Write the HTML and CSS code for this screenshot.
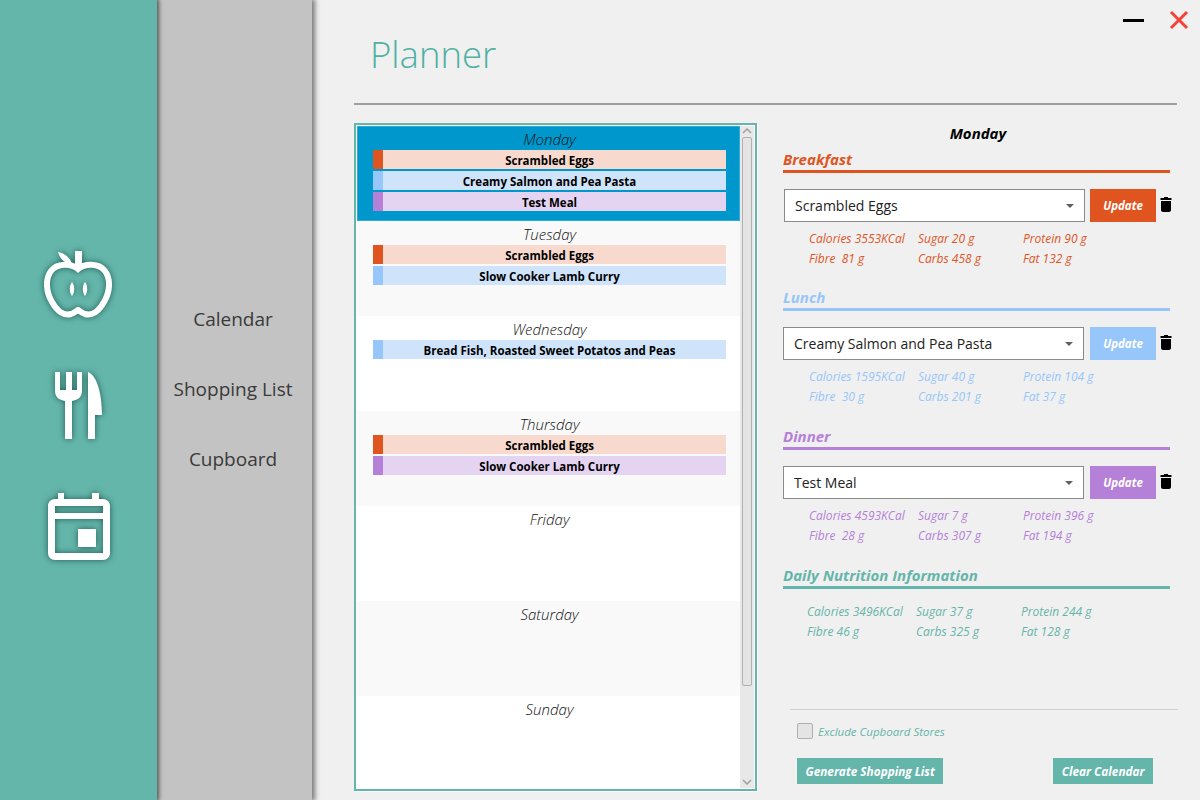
FILE: index.html
```html
<!DOCTYPE html>
<html lang="en">
<head>
    <meta charset="UTF-8">
    <title>Planner</title>
    <link rel="stylesheet" href="styles.css">
</head>
<body>
    <div class="app">
        <div class="iconBar">
            <svg class="icon" width="70" height="70" viewBox="0 0 70 70">
                <path d="M34 19C27 13 13 13 7 21C1 29 2 42 8 52C13 61 20 66 27 64C30 63 32 61 34 60C36 61 38 63 41 64C48 66 55 61 60 52C66 42 67 29 61 21C55 13 41 13 34 19Z" fill="none" stroke="#fff" stroke-width="6"/>
                <path d="M31 1H38V17L34 21L31 18Z" fill="#fff"/>
                <path d="M14 2C20 3 26 7 28 14C22 14 16 10 14 2Z" fill="#fff"/>
                <path d="M28 32C31 36 31 42 28 46C25 42 25 36 28 32ZM41 32C44 36 44 42 41 46C38 42 38 36 41 32Z" fill="#fff"/>
            </svg>
            <svg class="icon" width="50" height="70" viewBox="0 0 50 70">
                <path d="M1 1H6V19H12V1H18V19H23V1H28V20C28 26 24 29 18 30V68H11V30C5 29 1 26 1 20Z" fill="#fff"/>
                <path d="M34 1C42 4 48 20 48 44H41V68H34Z" fill="#fff"/>
            </svg>
            <svg class="icon" width="64" height="70" viewBox="0 0 64 70">
                <path d="M11 1H17V7H45V1H52V7H56C60 7 63 10 63 14V61C63 65 60 68 56 68H8C4 68 1 65 1 61V14C1 10 4 7 8 7H11ZM8 14V21H56V14ZM8 27V61H56V27ZM31 37H49V55H31Z" fill="#fff" fill-rule="evenodd"/>
            </svg>
        </div>

        <div class="navBar">
            <a class="navLink">Calendar</a>
            <a class="navLink">Shopping List</a>
            <a class="navLink">Cupboard</a>
        </div>

        <div class="main">
            <div class="windowBtns">
                <span class="minBtn"></span>
                <svg width="20" height="20" viewBox="0 0 20 20"><path d="M2 2L18 18M18 2L2 18" stroke="#f44336" stroke-width="3"/></svg>
            </div>

            <div class="header"><h1>Planner</h1></div>

            <div class="content">
                <div class="weekBox">
                    <div class="weekList">
                        <div class="day selected">
                            <div class="dayName">Monday</div>
                            <div class="meal breakfast"><span class="swatch"></span><span class="mealName">Scrambled Eggs</span></div>
                            <div class="meal lunch"><span class="swatch"></span><span class="mealName">Creamy Salmon and Pea Pasta</span></div>
                            <div class="meal dinner"><span class="swatch"></span><span class="mealName">Test Meal</span></div>
                        </div>
                        <div class="day odd">
                            <div class="dayName">Tuesday</div>
                            <div class="meal breakfast"><span class="swatch"></span><span class="mealName">Scrambled Eggs</span></div>
                            <div class="meal lunch"><span class="swatch"></span><span class="mealName">Slow Cooker Lamb Curry</span></div>
                        </div>
                        <div class="day">
                            <div class="dayName">Wednesday</div>
                            <div class="meal lunch"><span class="swatch"></span><span class="mealName">Bread Fish, Roasted Sweet Potatos and Peas</span></div>
                        </div>
                        <div class="day odd">
                            <div class="dayName">Thursday</div>
                            <div class="meal breakfast"><span class="swatch"></span><span class="mealName">Scrambled Eggs</span></div>
                            <div class="meal dinner"><span class="swatch"></span><span class="mealName">Slow Cooker Lamb Curry</span></div>
                        </div>
                        <div class="day"><div class="dayName">Friday</div></div>
                        <div class="day odd"><div class="dayName">Saturday</div></div>
                        <div class="day"><div class="dayName">Sunday</div></div>
                    </div>
                    <div class="scrollBar">
                        <svg class="scrollUp" width="14" height="11" viewBox="0 0 14 11"><path d="M3 7L7 3L11 7" fill="none" stroke="#a0a0a0" stroke-width="1.5"/></svg>
                        <div class="scrollThumb"></div>
                        <svg class="scrollDown" width="14" height="12" viewBox="0 0 14 12"><path d="M3 4L7 8L11 4" fill="none" stroke="#a0a0a0" stroke-width="1.5"/></svg>
                    </div>
                </div>

                <div class="details">
                    <div class="detailsDay">Monday</div>

                    <div class="section breakfastText">
                        <div class="sectionTitle">Breakfast</div>
                        <div class="mealRow first">
                            <div class="selectWrap"><select><option>Scrambled Eggs</option></select></div>
                            <button class="updateBtn">Update</button>
                            <svg class="trash" width="12" height="15" viewBox="0 0 12 15"><path d="M4 0H8V1H11.500V3H.5V1H4ZM1 4H11V13C11 14 10 15 9 15H3C2 15 1 14 1 13Z" fill="#000"/></svg>
                        </div>
                        <div class="stats">
                            <span>Calories 3553KCal</span><span>Sugar 20 g</span><span>Protein 90 g</span>
                            <span>Fibre &nbsp;81 g</span><span>Carbs 458 g</span><span>Fat 132 g</span>
                        </div>
                    </div>

                    <div class="section lunchText">
                        <div class="sectionTitle">Lunch</div>
                        <div class="mealRow">
                            <div class="selectWrap"><select><option>Creamy Salmon and Pea Pasta</option></select></div>
                            <button class="updateBtn">Update</button>
                            <svg class="trash" width="12" height="15" viewBox="0 0 12 15"><path d="M4 0H8V1H11.500V3H.5V1H4ZM1 4H11V13C11 14 10 15 9 15H3C2 15 1 14 1 13Z" fill="#000"/></svg>
                        </div>
                        <div class="stats">
                            <span>Calories 1595KCal</span><span>Sugar 40 g</span><span>Protein 104 g</span>
                            <span>Fibre &nbsp;30 g</span><span>Carbs 201 g</span><span>Fat 37 g</span>
                        </div>
                    </div>

                    <div class="section dinnerText">
                        <div class="sectionTitle">Dinner</div>
                        <div class="mealRow">
                            <div class="selectWrap"><select><option>Test Meal</option></select></div>
                            <button class="updateBtn">Update</button>
                            <svg class="trash" width="12" height="15" viewBox="0 0 12 15"><path d="M4 0H8V1H11.500V3H.5V1H4ZM1 4H11V13C11 14 10 15 9 15H3C2 15 1 14 1 13Z" fill="#000"/></svg>
                        </div>
                        <div class="stats">
                            <span>Calories 4593KCal</span><span>Sugar 7 g</span><span>Protein 396 g</span>
                            <span>Fibre &nbsp;28 g</span><span>Carbs 307 g</span><span>Fat 194 g</span>
                        </div>
                    </div>

                    <div class="section dailyText">
                        <div class="sectionTitle">Daily Nutrition Information</div>
                        <div class="stats daily">
                            <span>Calories 3496KCal</span><span>Sugar 37 g</span><span>Protein 244 g</span>
                            <span>Fibre 46 g</span><span>Carbs 325 g</span><span>Fat 128 g</span>
                        </div>
                    </div>

                    <div class="footer">
                        <label class="exclude"><input type="checkbox">Exclude Cupboard Stores</label>
                        <div class="footerBtns">
                            <button class="footerBtn">Generate Shopping List</button>
                            <button class="footerBtn">Clear Calendar</button>
                        </div>
                    </div>
                </div>
            </div>
        </div>
    </div>
</body>
</html>
```

FILE: styles.css
```css
* {
    box-sizing: border-box;
}

body {
    font-family: "Open Sans", "Noto Sans", sans-serif;
    margin: 0;
    padding: 0;
    color: #000000;
    overflow: hidden;
}

.app {
    display: flex;
    width: 1200px;
    height: 800px;
    background-color: #f0f0f0;
}

.iconBar {
    position: relative;
    z-index: 2;
    display: flex;
    flex-direction: column;
    align-items: center;
    justify-content: center;
    width: 157px;
    gap: 51px;
    padding-top: 12px;
    background-color: #64b5aa;
    box-shadow: 1px 0 4px 1px #555555;
}

.icon {
    filter: drop-shadow(0 0 3px #1f5d54);
}

.navBar {
    position: relative;
    z-index: 1;
    display: flex;
    flex-direction: column;
    align-items: center;
    justify-content: center;
    width: 155px;
    gap: 43px;
    padding-bottom: 22px;
    padding-right: 3px;
    background-color: #c3c3c3;
    box-shadow: 2px 0 5px 1px #777777;
}

.navLink {
    font-size: 19px;
    line-height: 27px;
    color: #3a3a3a;
}

.main {
    position: relative;
    flex: 1;
    display: flex;
    flex-direction: column;
    padding-left: 42px;
    padding-right: 23px;
}

.windowBtns {
    position: absolute;
    top: 10px;
    right: 11px;
    display: flex;
    align-items: center;
    gap: 25px;
}

.minBtn {
    width: 21px;
    height: 3px;
    background-color: #000000;
}

.header {
    height: 105px;
    padding-left: 16px;
    border-bottom: 2px solid #a0a0a0;
    flex-shrink: 0;
}

.header h1 {
    margin: 0;
    padding-top: 28px;
    font-size: 36.500px;
    line-height: 52px;
    font-weight: 300;
    color: #4fb0a3;
}

.content {
    flex: 1;
    display: flex;
    min-height: 0;
    padding-top: 18px;
}

.weekBox {
    display: flex;
    width: 403px;
    height: 668px;
    flex-shrink: 0;
    padding: 1px;
    border: 2px solid #64b5aa;
    background-color: #ffffff;
    box-shadow: 1px 1px 0 #ffffff;
}

.weekList {
    width: 384px;
    overflow: hidden;
}

.day {
    height: 95px;
    padding: 0 14px 0 16px;
    background-color: #ffffff;
}

.day.odd {
    background-color: #f9f9f9;
}

.day.selected {
    background-color: #0097cc;
    box-shadow: inset 0 0 0 1px #30aad6;
}

.dayName {
    height: 24px;
    font-size: 15px;
    line-height: 26px;
    font-style: italic;
    font-weight: 300;
    text-align: center;
    color: #111111;
}

.meal {
    display: flex;
    height: 19px;
    margin-bottom: 2px;
}

.swatch {
    width: 10px;
    flex-shrink: 0;
}

.mealName {
    flex: 1;
    padding-right: 10px;
    font-size: 11.500px;
    line-height: 22px;
    font-weight: 700;
    text-align: center;
    color: #000000;
    white-space: nowrap;
}

.meal.breakfast {
    background-color: #f7d9cd;
}

.breakfast .swatch {
    background-color: #e0551f;
}

.meal.lunch {
    background-color: #cfe3fb;
}

.lunch .swatch {
    background-color: #97c6fb;
}

.meal.dinner {
    background-color: #e5d4f1;
}

.dinner .swatch {
    background-color: #b580d8;
}

.scrollBar {
    display: flex;
    flex-direction: column;
    align-items: center;
    width: 14px;
    background-color: #e8e8e8;
}

.scrollUp {
    flex-shrink: 0;
}

.scrollThumb {
    width: 10px;
    height: 549px;
    border: 1px solid #b0b0b0;
    border-radius: 2px;
    background-color: #e4e4e4;
}

.scrollDown {
    margin-top: auto;
}

.details {
    flex: 1;
    display: flex;
    flex-direction: column;
    margin-left: 26px;
    min-width: 0;
}

.detailsDay {
    height: 27px;
    margin-right: 4px;
    font-size: 15px;
    line-height: 21px;
    font-weight: 700;
    font-style: italic;
    text-align: center;
}

.section {
    height: 139px;
    flex-shrink: 0;
}

.breakfastText {
    height: 138px;
    color: #e0551f;
}

.sectionTitle {
    width: 387px;
    height: 23px;
    font-size: 15px;
    line-height: 19px;
    font-weight: 700;
    font-style: italic;
    border-bottom: 3px solid currentColor;
}

.mealRow {
    display: flex;
    align-items: flex-start;
    margin-top: 16px;
}

.mealRow.first {
    padding-left: 1px;
}

.selectWrap {
    position: relative;
    width: 301px;
    height: 33px;
}

.selectWrap::after {
    content: "";
    position: absolute;
    top: 15px;
    right: 11px;
    border-left: 4px solid transparent;
    border-right: 4px solid transparent;
    border-top: 4px solid #606060;
    pointer-events: none;
}

select {
    appearance: none;
    width: 100%;
    height: 100%;
    padding: 0 10px;
    border: 1px solid #8a8a8a;
    border-radius: 0;
    background-color: #ffffff;
    font-family: "Open Sans", "Noto Sans", sans-serif;
    font-size: 14px;
    color: #222222;
}

.updateBtn {
    width: 66px;
    height: 33px;
    margin-left: 5px;
    padding: 0;
    border: none;
    font-family: "Open Sans", "Noto Sans", sans-serif;
    font-size: 11.500px;
    font-weight: 700;
    font-style: italic;
    color: #ffffff;
}

.breakfastText .updateBtn {
    margin-left: 5px;
    background-color: #e0551f;
}

.lunchText .updateBtn {
    margin-left: 6px;
    background-color: #97c6fb;
}

.dinnerText .updateBtn {
    margin-left: 6px;
    background-color: #b580d8;
}

.trash {
    margin: 8px 0 0 4px;
}

.lunchText {
    color: #97c6fb;
}

.dinnerText {
    color: #b580d8;
}

.dailyText {
    color: #64b5aa;
}

.stats {
    display: grid;
    grid-template-columns: 109px 105px auto;
    margin-top: 7px;
    padding-left: 26px;
    font-size: 12px;
    line-height: 20px;
    font-style: italic;
    font-weight: 400;
}

.stats.daily {
    margin-top: 13px;
    padding-left: 24px;
}

.footer {
    margin-top: auto;
    margin-left: 7px;
    margin-right: -1px;
    padding: 13px 25px 16px 7px;
    border-top: 1px solid #d0d0d0;
}

.exclude {
    display: flex;
    align-items: center;
    gap: 5px;
    font-size: 11.500px;
    font-style: italic;
    font-weight: 400;
    color: #64b5aa;
}

.exclude input {
    appearance: none;
    width: 16px;
    height: 16px;
    margin: 0;
    border: 1px solid #b0b0b0;
    border-radius: 2px;
    background-color: #e4e4e4;
}

.footerBtns {
    display: flex;
    justify-content: space-between;
    margin-top: 19px;
}

.footerBtn {
    height: 26px;
    padding: 0 8.500px;
    border: none;
    background-color: #64b5aa;
    font-family: "Open Sans", "Noto Sans", sans-serif;
    font-size: 11.800px;
    font-weight: 700;
    font-style: italic;
    color: #ffffff;
}
```
